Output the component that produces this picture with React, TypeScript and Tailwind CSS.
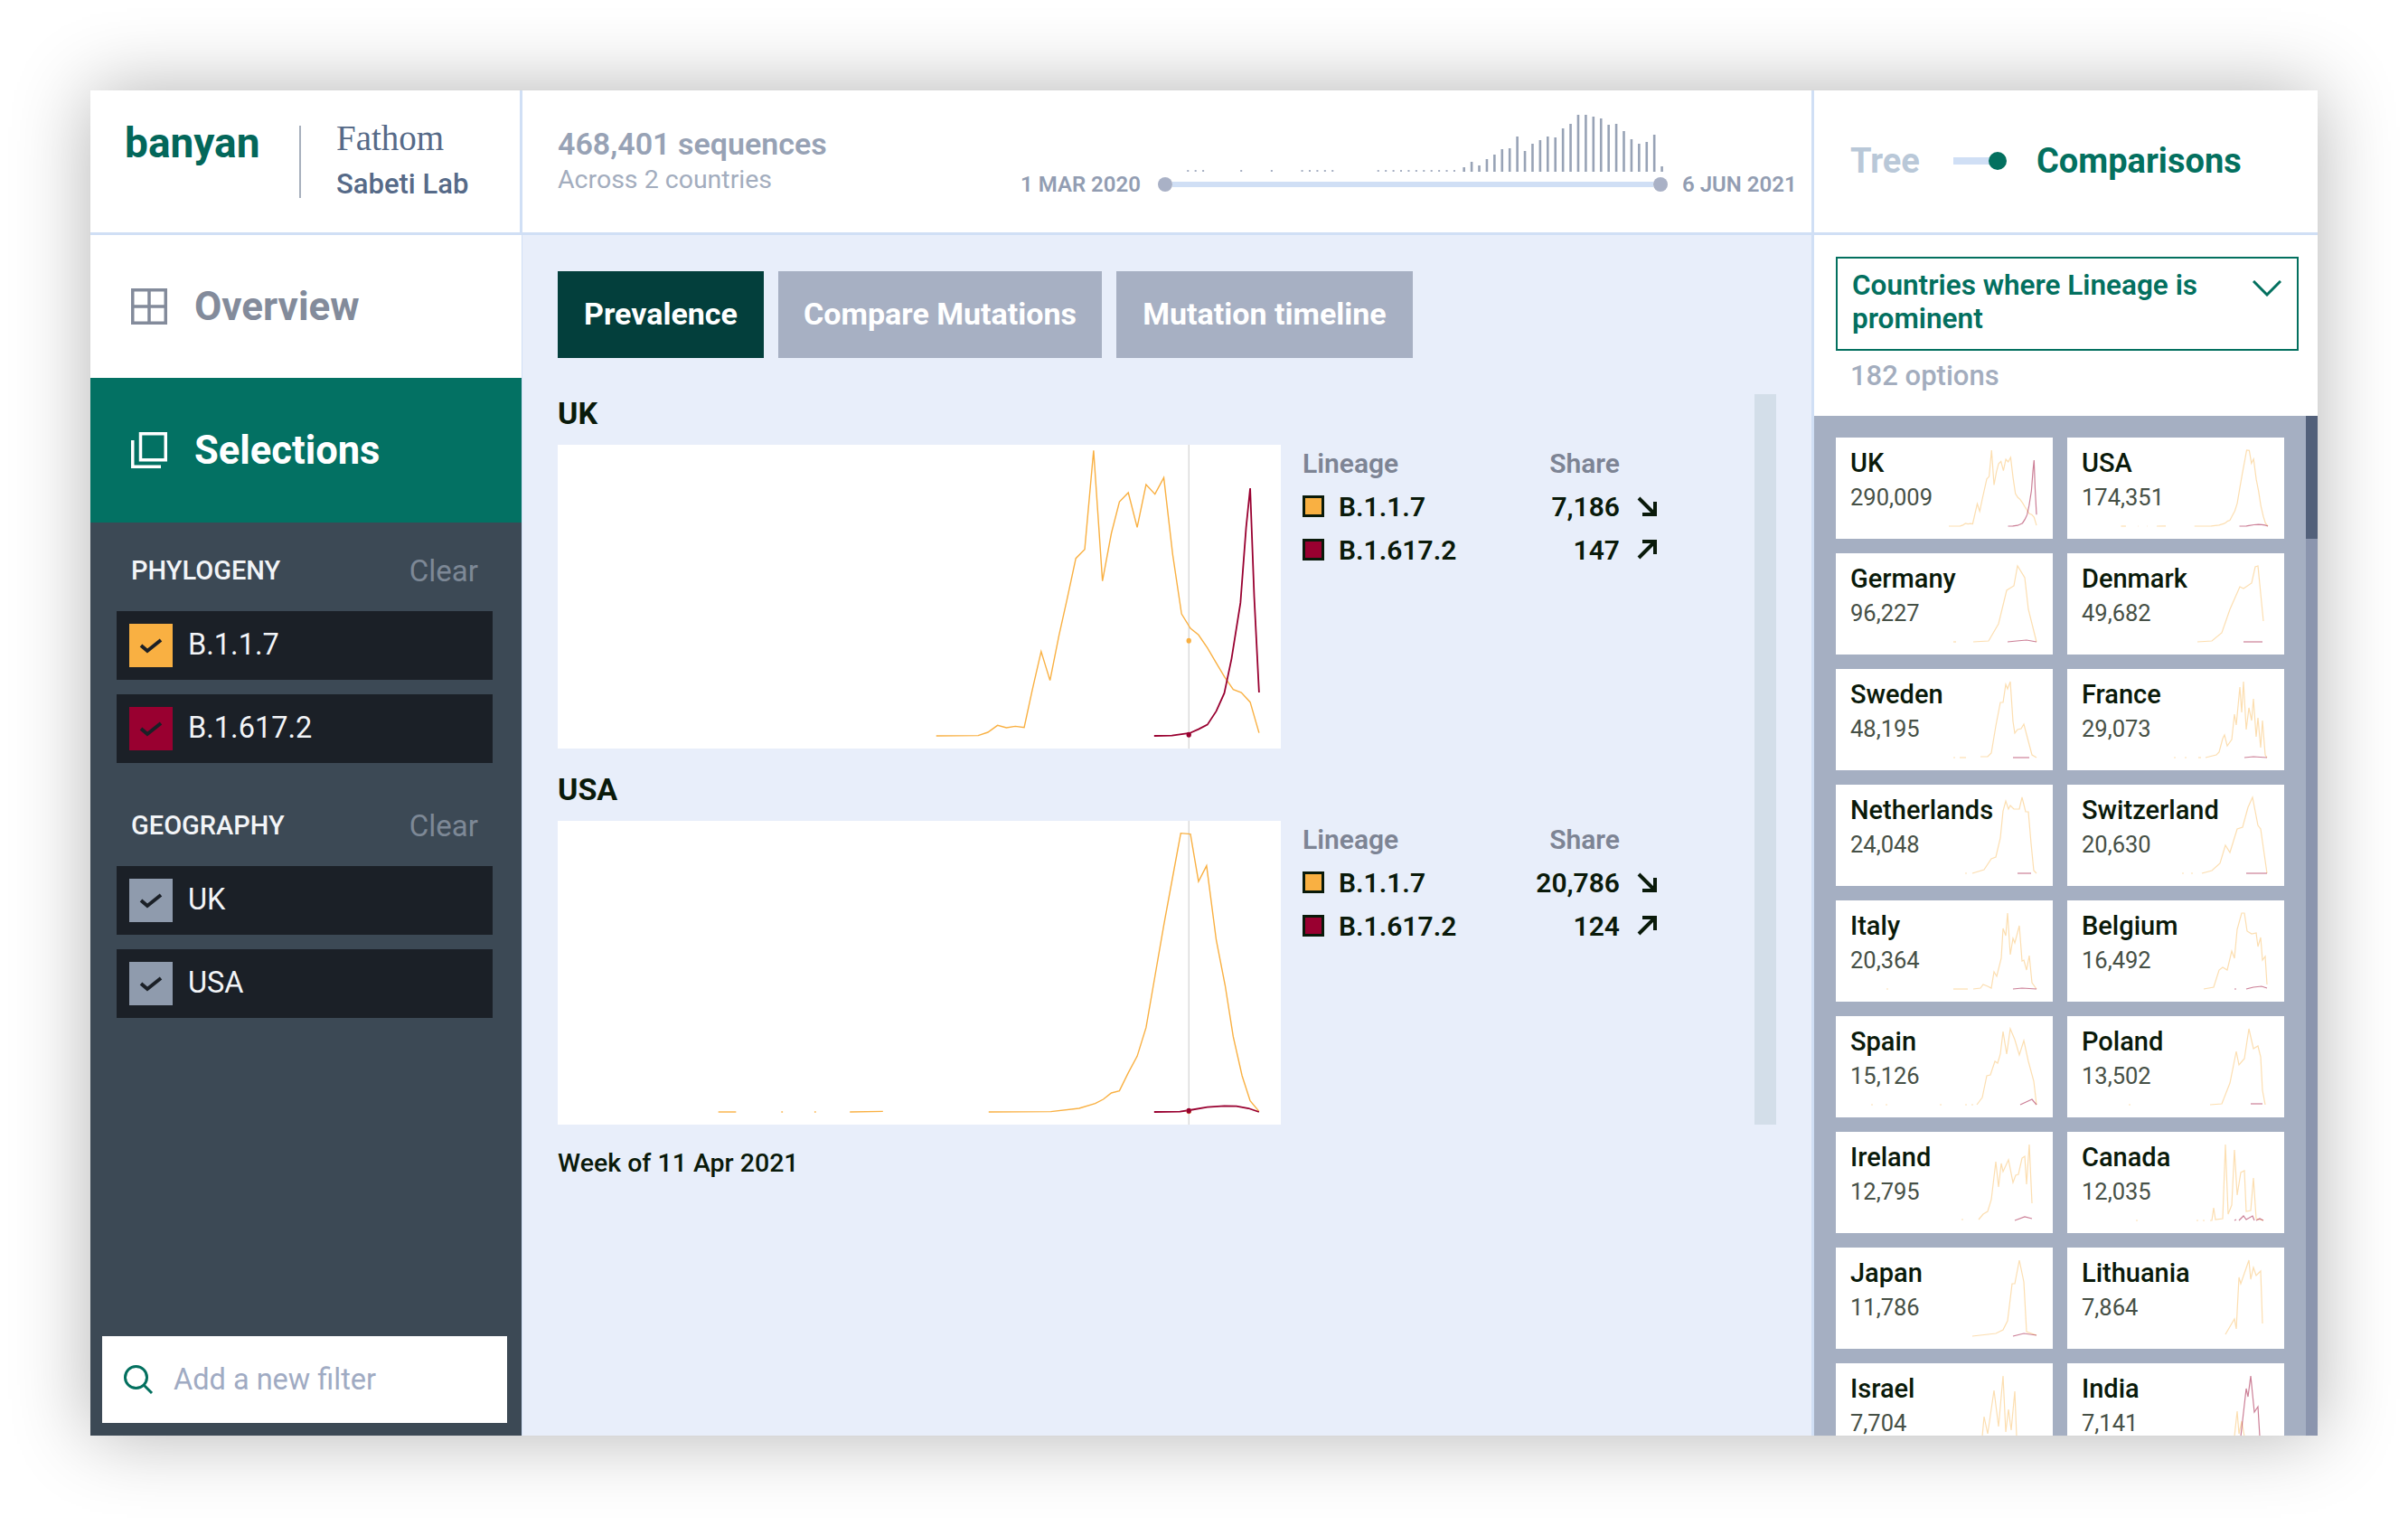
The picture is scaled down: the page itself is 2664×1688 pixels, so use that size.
import { FC } from "react";

const ukOrange =
  "488,1032 540,1031 552,1020 564,997 575,1005 586,1000 597,1004 607,880 618,752 629,848 640,700 650,580 661,443 672,413 683,85 694,518 705,360 715,255 726,225 737,340 748,198 759,230 770,175 781,430 792,627 803,675 813,697 824,740 835,790 845,835 856,878 866,888 877,920 888,1022";
const ukRed =
  "758,1032 780,1031 802,1023 813,1010 824,995 835,950 845,890 854,775 865,590 872,340 877,210 882,570 888,888";
const usaOrange = [
  "218,1020 240,1020",
  "296,1020 298,1020",
  "337,1020 339,1020",
  "381,1020 422,1018",
  "553,1020 630,1019 665,1008 685,992 695,978 705,957 715,950 726,890 737,835 748,740 759,570 770,400 781,240 791,95 803,98 813,255 823,203 835,450 846,600 856,770 867,900 877,983 888,1018",
];
const usaRed = "758,1020 790,1019 802,1014 824,1004 845,1000 860,1001 875,1008 888,1020";

// big chart coordinates -> card coordinates
const toCard = (pts: string, top: number, k: number) =>
  pts
    .split(" ")
    .map((p) => {
      const [x, y] = p.split(",").map(Number);
      return `${(125 + (x - 488) * 0.2425).toFixed(1)},${(14 + (y - top) * k).toFixed(1)}`;
    })
    .join(" ");

interface Country {
  name: string;
  count: string;
  orange: string[];
  red: string[];
}

const countries: Country[] = [
  { name: "UK", count: "290,009", orange: [toCard(ukOrange, 85, 0.0887)], red: [toCard(ukRed, 85, 0.0887)] },
  { name: "USA", count: "174,351", orange: usaOrange.map((s) => toCard(s, 95, 0.0908)), red: [toCard(usaRed, 95, 0.0908)] },
  {
    name: "Germany",
    count: "96,227",
    orange: ["130,98 133,98", "152,98 169,97 180,78 189,41 197,36 201,14 209,27 213,62 222,98"],
    red: ["190,98 200,97 211,96 222,98"],
  },
  {
    name: "Denmark",
    count: "49,682",
    orange: ["144,98 160,97 171,88 180,62 191,37 195,39 204,33 208,15 211,14 217,75"],
    red: ["195,98 216,98"],
  },
  {
    name: "Sweden",
    count: "48,195",
    orange: ["130,98 132,98", "137,98 144,98", "160,97 168,97 172,93 177,63 182,37 185,37 188,17 190,22 193,14 196,58 198,71 201,67 205,66 208,61 213,80 217,95 222,98"],
    red: ["196,98 214,98"],
  },
  {
    name: "France",
    count: "29,073",
    orange: ["118,98 120,98", "130,98 132,98", "145,98 148,98", "153,98 165,95 168,92 172,77 174,73 177,85 182,78 185,50 187,62 191,20 193,48 195,14 198,67 201,43 204,57 206,33 209,75 211,54 214,87 216,57 219,95 221,98"],
    red: ["196,98 206,97 221,98"],
  },
  {
    name: "Netherlands",
    count: "24,048",
    orange: ["143,98 145,98", "151,98 164,94 172,82 177,80 182,59 185,29 188,18 191,27 193,23 197,27 203,27 206,14 210,30 213,30 216,65 219,95 222,98"],
    red: ["201,98 216,98"],
  },
  {
    name: "Switzerland",
    count: "20,630",
    orange: ["137,98 139,98", "129,98 127,98", "149,98 160,95 169,87 175,67 180,75 188,49 194,47 200,25 205,14 211,45 214,49 221,98"],
    red: ["198,98 221,98"],
  },
  {
    name: "Italy",
    count: "20,364",
    orange: ["56,98 58,98", "130,98 146,98", "152,98 160,97 163,93 168,95 172,97 175,79 178,84 183,64 185,31 188,39 190,14 193,60 196,42 198,47 203,28 206,67 208,66 211,77 214,61 217,91 222,98"],
    red: ["196,98 206,97 222,98"],
  },
  {
    name: "Belgium",
    count: "16,492",
    orange: ["151,98 162,96 168,77 172,74 177,77 182,56 185,64 188,32 193,14 196,14 199,34 204,37 209,36 211,51 214,41 216,66 219,62 221,93"],
    red: ["185,98 187,98", "198,98 206,96 215,95 221,97"],
  },
  {
    name: "Spain",
    count: "15,126",
    orange: ["39,98 41,98", "55,98 57,98", "115,98 117,98", "143,98 145,98", "150,98 152,98", "156,98 162,90 167,66 171,65 176,50 179,52 182,42 185,17 189,42 193,14 198,26 203,43 208,27 213,50 219,72 222,98"],
    red: ["204,98 217,92 222,98"],
  },
  {
    name: "Poland",
    count: "13,502",
    orange: ["68,98 70,98", "158,98 171,97 180,74 187,39 190,54 196,47 201,14 206,36 211,33 214,45 216,82 219,98"],
    red: ["203,97 216,97"],
  },
  {
    name: "Ireland",
    count: "12,795",
    orange: ["139,97 141,97", "158,97 163,91 168,88 172,75 177,33 180,61 183,35 185,44 191,31 196,56 199,48 202,47 206,29 209,27 211,58 214,14 217,79"],
    red: ["198,98 209,94 217,96"],
  },
  {
    name: "Canada",
    count: "12,035",
    orange: ["76,98 78,98", "143,98 145,98", "150,98 152,98", "158,98 160,98 162,84 164,97 172,96 175,14 178,91 182,81 185,20 188,70 192,45 196,43 198,88 203,87 206,51 209,96 217,98"],
    red: ["185,98 187,97", "190,98 195,93 198,97 205,93 207,98", "209,98 213,96 217,98"],
  },
  {
    name: "Japan",
    count: "11,786",
    orange: ["151,98 177,95 185,91 190,81 195,40 198,40 203,14 208,38 211,93 222,97"],
    red: ["196,98 208,95 222,97"],
  },
  {
    name: "Lithuania",
    count: "7,864",
    orange: ["175,96 185,79 187,90 190,33 192,40 201,14 203,35 206,22 209,31 214,26 216,84"],
    red: [],
  },
  {
    name: "Israel",
    count: "7,704",
    orange: ["150,98 162,81 164,59 168,78 175,30 180,70 185,14 188,76 191,51 194,74 198,31 200,81 210,98 222,98"],
    red: [],
  },
  {
    name: "India",
    count: "7,141",
    orange: ["178,98 185,81 188,53 190,78 193,64 196,81 202,98"],
    red: ["186,98 192,81 198,28 200,37 203,14 207,54 211,48 213,81 218,98"],
  },
];

const barHeights = [
  5, 11, 7, 14, 19, 25, 26, 39, 23, 31, 35, 39, 38, 48, 53, 63, 63, 61, 59, 52, 53, 45, 36, 31, 33, 41, 6,
];
const dotWeeks = [3, 4, 5, 10, 14, 18, 19, 20, 21, 22, 28, 29, 30, 31, 32, 33, 34, 35, 36, 37, 38];

const Timeline: FC = () => (
  <svg width="560" height="66" viewBox="0 0 560 66">
    {dotWeeks.map((w) => (
      <rect key={w} x={w * 8.42 - 2} y="62" width="2" height="2" fill="#a7b0c3" />
    ))}
    {barHeights.map((h, i) => (
      <rect key={i} x={39 * 8.42 + i * 8.42} y={64 - h} width="2.6" height={h} fill="#98a3b6" />
    ))}
  </svg>
);

const Check: FC = () => (
  <svg width="26" height="20" viewBox="0 0 26 20" fill="none" stroke="#1b2027" strokeWidth="4">
    <path d="M2 10 L9 16 L24 4" />
  </svg>
);

const Filter: FC<{ label: string; color: string }> = ({ label, color }) => (
  <div className="flex items-center h-[76px] w-[416px] bg-[#1b2027] pl-[14px]">
    <div className={`flex items-center justify-center w-[48px] h-[48px] ${color}`}>
      <Check />
    </div>
    <span className="ml-[17px] -mt-[2px] text-[32.5px] text-[#f2f4f7]">{label}</span>
  </div>
);

const GroupTitle: FC<{ label: string }> = ({ label }) => (
  <div className="flex items-center justify-between h-[40px] pl-[45px] pr-[48px]">
    <span className="text-[29px] font-medium text-[#f2f4f7]">{label}</span>
    <span className="text-[33px] text-[#7d8896]">Clear</span>
  </div>
);

const ArrowDown: FC = () => (
  <svg width="22" height="22" viewBox="0 0 22 22" fill="none" stroke="#0a1a0a" strokeWidth="4">
    <path d="M2 2 L19 19 M20 6 V20 H6" />
  </svg>
);

const ArrowUp: FC = () => (
  <svg width="22" height="22" viewBox="0 0 22 22" fill="none" stroke="#0a1a0a" strokeWidth="4">
    <path d="M2 20 L19 3 M6 2 H20 V16" />
  </svg>
);

const LegendRow: FC<{ color: string; label: string; value: string; up?: boolean }> = ({ color, label, value, up }) => (
  <div className="flex items-center h-[48px]">
    <div className={`w-[24px] h-[24px] border-[3px] border-[#0a1a0a] ${color}`} />
    <span className="ml-[16px] w-[311px] flex justify-between text-[30px] font-semibold text-[#0a1a0a]">
      <span>{label}</span>
      <span>{value}</span>
    </span>
    <span className="ml-[19px]">{up ? <ArrowUp /> : <ArrowDown />}</span>
  </div>
);

const Chart: FC<{
  title: string;
  top: number;
  orange: string[];
  red: string;
  orangeDot: number;
  redDot: number;
  rows: { value: string }[];
}> = ({ title, top, orange, red, orangeDot, redDot, rows }) => (
  <div>
    <h2 className="h-[32px] leading-[32px] mb-[19px] text-[34px] font-bold text-[#0a1a0a]">{title}</h2>
    <div className="flex">
      <div className="w-[800px] h-[336px] bg-white">
        <svg className="w-full h-full" viewBox={`19 ${top} 896 1008`} preserveAspectRatio="none" fill="none">
          <line x1="801" x2="801" y1={top} y2={top + 1008} stroke="#c9c9c9" strokeWidth="1" vectorEffect="non-scaling-stroke" />
          {orange.map((p) => (
            <polyline key={p} points={p} stroke="#f9b042" strokeWidth="1.4" vectorEffect="non-scaling-stroke" />
          ))}
          <polyline points={red} stroke="#990030" strokeWidth="1.8" vectorEffect="non-scaling-stroke" />
          <ellipse cx="801" cy={orangeDot} rx="3" ry="9" fill="#f9b042" />
          <ellipse cx="801" cy={redDot} rx="3" ry="9" fill="#990030" />
        </svg>
      </div>
      <div className="ml-[24px]">
        <div className="flex h-[40px] items-center w-[351px] justify-between mb-[4px] text-[30px] font-semibold text-[#7d8494]">
          <span>Lineage</span>
          <span>Share</span>
        </div>
        <LegendRow color="bg-[#f9b042]" label="B.1.1.7" value={rows[0].value} />
        <LegendRow color="bg-[#990030]" label="B.1.617.2" value={rows[1].value} up />
      </div>
    </div>
  </div>
);

const Card: FC<{ c: Country }> = ({ c }) => (
  <div className="relative w-[240px] h-[112px] shrink-0 bg-white pl-[16px] pt-[9px]">
    <svg className="absolute left-0 top-0" width="240" height="112" fill="none">
      {c.orange.map((p) => (
        <polyline key={p} points={p} stroke="#f9b042" strokeOpacity="0.42" strokeWidth="1.2" />
      ))}
      {c.red.map((p) => (
        <polyline key={p} points={p} stroke="#990030" strokeOpacity="0.5" strokeWidth="1.2" />
      ))}
    </svg>
    <div className="relative h-[38px] leading-[38px] text-[29px] font-medium text-[#0a1a0a]">{c.name}</div>
    <div className="relative h-[38px] leading-[38px] text-[25.5px] text-[#465046]">{c.count}</div>
  </div>
);

export default function App() {
  return (
    <div className="w-[2664px] h-[1688px] bg-white pt-[100px] pl-[100px] overflow-hidden font-['Roboto',sans-serif]">
      <div className="flex flex-col w-[2464px] h-[1488px] bg-white overflow-hidden shadow-[0_0_80px_rgba(0,0,0,0.3)]">
        <header className="flex h-[160px] shrink-0 border-b-[3px] border-[#d0dff5]">
          <div className="flex items-center w-[478px] shrink-0 border-r-[3px] border-[#d0dff5] pl-[38px]">
            <span className="w-[193px] -mt-[40px] text-[46px] font-bold text-[#03675a]">banyan</span>
            <div className="w-[2px] h-[80px] bg-[#a7b0bd]" />
            <div className="ml-[39px] flex flex-col text-[#566a88]">
              <span className="h-[50px] leading-[50px] font-['Liberation_Serif',serif] text-[39px]">Fathom</span>
              <span className="h-[50px] mt-[1px] leading-[50px] text-[31px] font-medium">Sabeti Lab</span>
            </div>
          </div>
          <div className="flex w-[1429px] shrink-0 border-r-[3px] border-[#d0dff5] pl-[39px]">
            <div className="w-[513px] pt-[36px]">
              <div className="h-[47px] leading-[47px] text-[34px] font-semibold text-[#97a2b5]">468,401 sequences</div>
              <div className="h-[32px] leading-[32px] text-[28.5px] text-[#a3adbe]">Across 2 countries</div>
            </div>
            <div className="flex flex-col pt-[26px]">
              <div className="ml-[160px] h-[65px]">
                <Timeline />
              </div>
              <div className="flex items-center h-[26px] -ml-[1px]">
                <span className="w-[132px] text-[24px] font-semibold text-[#929db2] whitespace-nowrap">1 MAR 2020</span>
                <div className="ml-[20px] w-[16px] h-[16px] rounded-full bg-[#a9b1c6]" />
                <div className="w-[532px] h-[6px] bg-[#d0dff5]" />
                <div className="w-[16px] h-[16px] rounded-full bg-[#a9b1c6]" />
                <span className="ml-[16px] text-[24px] font-semibold text-[#929db2] whitespace-nowrap">6 JUN 2021</span>
              </div>
            </div>
          </div>
          <div className="flex items-center flex-1 pl-[40px] -mt-[1px]">
            <span className="w-[113px] text-[38px] font-bold text-[#b9c8d8]">Tree</span>
            <div className="w-[40px] h-[8px] ml-[1px] bg-[#d0dff5]" />
            <div className="w-[20px] h-[20px] -ml-[1px] rounded-full bg-[#03705f]" />
            <span className="ml-[33px] text-[38px] font-bold text-[#03705f]">Comparisons</span>
          </div>
        </header>

        <div className="flex flex-1 min-h-0">
          <aside className="flex flex-col w-[477px] shrink-0">
            <div className="flex items-center h-[158px] pl-[45px] gap-[30px] text-[#838b9b]">
              <svg width="40" height="40" viewBox="0 0 40 40" fill="none" stroke="#838b9b" strokeWidth="3.5">
                <rect x="1.75" y="1.75" width="36.5" height="36.5" />
                <path d="M20 1.5 V38.5 M1.5 20 H38.5" />
              </svg>
              <span className="text-[44px] font-bold">Overview</span>
            </div>
            <div className="flex items-center h-[160px] pl-[45px] gap-[30px] bg-[#037163] text-white">
              <svg width="40" height="40" viewBox="0 0 40 40" fill="none" stroke="#ffffff" strokeWidth="3.5">
                <rect x="10.5" y="1.75" width="27.75" height="29" />
                <path d="M1.75 9 V38.25 H33" />
              </svg>
              <span className="mt-[1px] text-[43.5px] font-bold">Selections</span>
            </div>
            <div className="flex flex-col flex-1 min-h-0 bg-[#3c4955] pt-[34px]">
              <GroupTitle label="PHYLOGENY" />
              <div className="flex flex-col gap-[16px] mt-[24px] ml-[29px]">
                <Filter label="B.1.1.7" color="bg-[#f9b042]" />
                <Filter label="B.1.617.2" color="bg-[#990030]" />
              </div>
              <div className="mt-[50px]">
                <GroupTitle label="GEOGRAPHY" />
              </div>
              <div className="flex flex-col gap-[16px] mt-[24px] ml-[29px]">
                <Filter label="UK" color="bg-[#8f9bad]" />
                <Filter label="USA" color="bg-[#8f9bad]" />
              </div>
              <div className="flex items-center mt-auto mb-[14px] ml-[13px] w-[448px] h-[96px] bg-white pl-[23px]">
                <svg width="34" height="34" viewBox="0 0 34 34" fill="none" stroke="#03705f" strokeWidth="3">
                  <circle cx="14.5" cy="14.5" r="12" />
                  <path d="M23 23 L32 32" />
                </svg>
                <span className="ml-[22px] text-[32.5px] text-[#a0abc3]">Add a new filter</span>
              </div>
            </div>
          </aside>

          <main className="w-[1430px] shrink-0 bg-[#e8eefa] border-l-[1px] border-r-[3px] border-[#d0dff5] pt-[40px] pl-[39px]">
            <div className="flex gap-[16px] text-white text-[34px] font-bold">
              <div className="flex items-center justify-center w-[228px] h-[96px] pb-[2px] bg-[#033f3c]">Prevalence</div>
              <div className="flex items-center justify-center w-[358px] h-[96px] pb-[2px] bg-[#a7b0c3]">Compare Mutations</div>
              <div className="flex items-center justify-center w-[328px] h-[96px] pb-[2px] bg-[#a7b0c3]">Mutation timeline</div>
            </div>
            <div className="flex mt-[40px]">
              <div className="w-[1324px] pt-[5px]">
                <Chart
                  title="UK"
                  top={66}
                  orange={[ukOrange]}
                  red={ukRed}
                  orangeDot={716}
                  redDot={1028}
                  rows={[{ value: "7,186" }, { value: "147" }]}
                />
                <div className="mt-[29px]">
                  <Chart
                    title="USA"
                    top={54}
                    orange={usaOrange}
                    red={usaRed}
                    orangeDot={1018}
                    redDot={1016}
                    rows={[{ value: "20,786" }, { value: "124" }]}
                  />
                </div>
                <div className="mt-[27px] h-[32px] leading-[32px] text-[28.5px] font-medium text-[#0a1a0a]">Week of 11 Apr 2021</div>
              </div>
              <div className="w-[24px] h-[808px] bg-[#d3dee9]" />
            </div>
          </main>

          <section className="flex flex-col flex-1 min-w-0">
            <div className="mt-[24px] ml-[24px] flex w-[512px] h-[104px] border-[2px] border-[#03705f] pl-[16px] pr-[17px] pt-[11px]">
              <span className="w-[440px] leading-[37px] text-[31.5px] font-semibold text-[#03705f]">
                Countries where Lineage is prominent
              </span>
              <svg className="mt-[13px] ml-auto" width="32" height="18" viewBox="0 0 32 18" fill="none" stroke="#03705f" strokeWidth="3">
                <path d="M1 1 L16 16 L31 1" />
              </svg>
            </div>
            <div className="mt-[12px] ml-[40px] h-[32px] leading-[32px] text-[31px] font-medium text-[#a3adbe]">182 options</div>
            <div className="flex flex-1 min-h-0 mt-[28px] bg-[#a5afc2] overflow-hidden">
              <div className="flex flex-wrap content-start gap-[16px] w-[544px] pl-[24px] pt-[24px] pr-[24px]">
                {countries.map((c) => (
                  <Card key={c.name} c={c} />
                ))}
              </div>
              <div className="w-[13px] bg-[#8b95ae]">
                <div className="h-[136px] bg-[#52607a]" />
              </div>
            </div>
          </section>
        </div>
      </div>
    </div>
  );
}
